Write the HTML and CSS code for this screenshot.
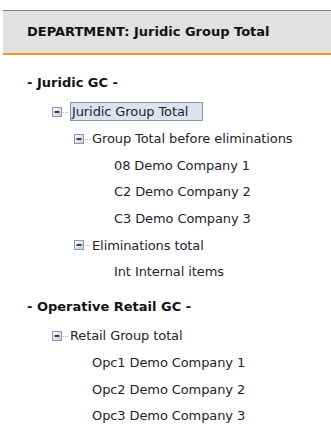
FILE: index.html
```html
<!DOCTYPE html>
<html lang="en">
<head>
<meta charset="utf-8">
<title>Department tree</title>
<link rel="stylesheet" href="styles.css">
</head>
<body>
<div class="page">
  <div class="dept">DEPARTMENT: Juridic Group Total</div>

  <section class="section">
    <div class="group-title">- Juridic GC -</div>
    <ul class="tree">
      <li class="row lvl1"><span class="toggle"><svg width="18" height="10" viewBox="0 0 18 10"><use href="#minus"/></svg></span><span class="node selected">Juridic Group Total</span></li>
      <li class="row lvl2"><span class="toggle"><svg width="18" height="10" viewBox="0 0 18 10"><use href="#minus"/></svg></span><span class="node">Group Total before eliminations</span></li>
      <li class="row lvl3"><span class="toggle"></span><span class="node">08 Demo Company 1</span></li>
      <li class="row lvl3"><span class="toggle"></span><span class="node">C2 Demo Company 2</span></li>
      <li class="row lvl3"><span class="toggle"></span><span class="node">C3 Demo Company 3</span></li>
      <li class="row lvl2"><span class="toggle"><svg width="18" height="10" viewBox="0 0 18 10"><use href="#minus"/></svg></span><span class="node">Eliminations total</span></li>
      <li class="row lvl3"><span class="toggle"></span><span class="node">Int Internal items</span></li>
    </ul>
  </section>

  <section class="section second">
    <div class="group-title">- Operative Retail GC -</div>
    <ul class="tree">
      <li class="row lvl1"><span class="toggle"><svg width="18" height="10" viewBox="0 0 18 10"><use href="#minus"/></svg></span><span class="node">Retail Group total</span></li>
      <li class="row lvl2"><span class="toggle"></span><span class="node">Opc1 Demo Company 1</span></li>
      <li class="row lvl2"><span class="toggle"></span><span class="node">Opc2 Demo Company 2</span></li>
      <li class="row lvl2"><span class="toggle"></span><span class="node">Opc3 Demo Company 3</span></li>
    </ul>
  </section>
</div>

<svg class="defs" width="0" height="0" aria-hidden="true">
  <defs>
    <linearGradient id="boxgrad" x1="0" y1="0" x2="1" y2="1">
      <stop offset="0" stop-color="#ffffff"/>
      <stop offset="1" stop-color="#bfcad8"/>
    </linearGradient>
    <g id="minus">
      <rect x="0.5" y="0.5" width="9" height="9" fill="url(#boxgrad)" stroke="#8a9bb1"/>
      <rect x="2.5" y="4" width="5" height="2" fill="#3a3d44"/>
      <line x1="11" y1="5.5" x2="17" y2="5.5" stroke="#b0b0b0" stroke-dasharray="1 1"/>
    </g>
  </defs>
</svg>
</body>
</html>
```

FILE: styles.css
```css
html, body {
  margin: 0;
  padding: 0;
  background: #ffffff;
}

body {
  font-family: "DejaVu Sans", Verdana, sans-serif;
  font-size: 13px;
  color: #1f2230;
}

.page {
  padding-left: 3px;
  padding-top: 10px;
}

.dept {
  box-sizing: border-box;
  height: 45px;
  padding-bottom: 2px;
  padding-left: 24px;
  display: flex;
  align-items: center;
  background: #e1e1e1;
  border-top: 1px solid #7d8894;
  border-bottom: 2px solid #f39a1e;
  font-weight: bold;
  color: #111118;
}

.section {
  margin-top: 16px;
}

.section.second {
  margin-top: 9.67px;
}

.group-title {
  height: 24px;
  line-height: 24px;
  padding-left: 24px;
  font-weight: bold;
  color: #111118;
}

.tree {
  list-style: none;
  margin: 3.67px 0 0 0;
  padding: 0 0 0 49px;
}

.row {
  height: 26.67px;
  display: flex;
  align-items: center;
}

.lvl2 { padding-left: 22px; }
.lvl3 { padding-left: 44px; }

.toggle {
  width: 18px;
  height: 10px;
  flex: none;
  display: flex;
}

.toggle svg {
  display: block;
}

.node {
  line-height: 15px;
  letter-spacing: -0.1px;
  white-space: nowrap;
}

.node.selected {
  border: 1px solid #8494aa;
  padding: 1px 14px 1px 1px;
  background: #dce3ed;
}

.defs {
  position: absolute;
  width: 0;
  height: 0;
}
```
